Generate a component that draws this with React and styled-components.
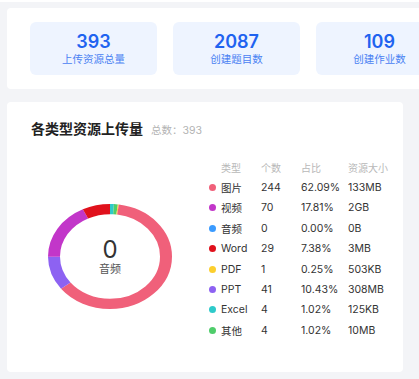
import React from "react";
import styled, { createGlobalStyle } from "styled-components";

const GlobalStyle = createGlobalStyle`
  html, body {
    margin: 0;
    padding: 0;
    background: #f3f4f7;
    overflow: hidden;
    font-family: "Inter", "Noto Sans CJK SC", sans-serif;
  }
`;

const Page = styled.div`
  width: 419px;
  height: 379px;
  overflow: hidden;
  border-top: 2px solid #ffffff;
  box-sizing: border-box;
  padding: 6px 0 0 7px;
`;

const Card = styled.div`
  background: #fff;
  border-radius: 4px;
  box-sizing: border-box;
`;

const StatCard = styled(Card)`
  width: 470px;
  height: 81px;
  padding: 14px 23px;
  display: flex;
  gap: 16px;
`;

const StatBox = styled.div`
  flex: 0 0 127px;
  height: 53px;
  border-radius: 6px;
  background: #eef4ff;
  display: flex;
  flex-direction: column;
  align-items: center;
  justify-content: center;
`;

const StatNum = styled.div`
  font-size: 18px;
  font-weight: 600;
  color: #1f63f0;
  line-height: 21px;
`;

const StatLabel = styled.div`
  font-size: 10.5px;
  color: #4a82f3;
  line-height: 15px;
`;

const TypeCard = styled(Card)`
  margin-top: 13px;
  width: 396px;
  height: 270px;
  padding: 17px 24px;
`;

const TitleRow = styled.div`
  display: flex;
  align-items: baseline;
  gap: 8px;
  height: 20px;
  line-height: 20px;
`;

const Title = styled.div`
  font-size: 14px;
  font-weight: 700;
  color: #222;
`;

const Sub = styled.div`
  font-size: 10.5px;
  color: #b3b3b3;
`;

const Body = styled.div`
  display: flex;
  margin-top: 18px;
`;

const ChartWrap = styled.div`
  position: relative;
  width: 124px;
  height: 105px;
  margin: 47px 0 0 17px;
`;

const Center = styled.div`
  position: absolute;
  inset: 0;
  display: flex;
  flex-direction: column;
  align-items: center;
  justify-content: center;
`;

const CenterNum = styled.div`
  font-size: 24px;
  line-height: 26px;
  color: #333;
`;

const CenterLabel = styled.div`
  font-size: 11px;
  line-height: 13px;
  color: #555;
`;

const Table = styled.div`
  margin-left: 37px;
  display: grid;
  grid-template-columns: 52px 40px 47px auto;
  grid-auto-rows: 20.4px;
  align-items: center;
  font-size: 10.5px;
  color: #333;
  white-space: nowrap;
`;

const Head = styled.div`
  font-size: 10px;
  color: #b8b8b8;
  padding-left: ${p => (p.first ? "12px" : "0")};
`;

const TypeCell = styled.div`
  display: flex;
  align-items: center;
  gap: 5px;
`;

const Dot = styled.span`
  width: 7px;
  height: 7px;
  border-radius: 50%;
  background: ${p => p.color};
  flex: none;
`;

const Cell = styled.div``;

const rows = [
  { name: "图片", count: 244, pct: "62.09%", size: "133MB", color: "#f0607a" },
  { name: "视频", count: 70, pct: "17.81%", size: "2GB", color: "#c236c9" },
  { name: "音频", count: 0, pct: "0.00%", size: "0B", color: "#3b9bff" },
  { name: "Word", count: 29, pct: "7.38%", size: "3MB", color: "#e0111c" },
  { name: "PDF", count: 1, pct: "0.25%", size: "503KB", color: "#fccf2e" },
  { name: "PPT", count: 41, pct: "10.43%", size: "308MB", color: "#8d62f2" },
  { name: "Excel", count: 4, pct: "1.02%", size: "125KB", color: "#2ecaca" },
  { name: "其他", count: 4, pct: "1.02%", size: "10MB", color: "#4fcd6b" },
];

// clockwise order of slices starting at 12 o'clock
const ringOrder = ["Excel", "其他", "PDF", "图片", "PPT", "视频", "Word"];

function Donut() {
  const total = rows.reduce((s, r) => s + r.count, 0);
  const R = 56;
  const C = 2 * Math.PI * R;
  let acc = 0;
  const segs = ringOrder.map(n => {
    const r = rows.find(x => x.name === n);
    const len = (r.count / total) * C;
    const seg = { color: r.color, len, off: acc };
    acc += len;
    return seg;
  });
  return (
    <svg width="124" height="105" viewBox="0 0 124 124" preserveAspectRatio="none">
      <g transform="rotate(-90 62 62)">
        {segs.map((s, i) => (
          <circle
            key={i}
            cx="62"
            cy="62"
            r={R}
            fill="none"
            stroke={s.color}
            strokeWidth="12"
            strokeDasharray={`${s.len} ${C - s.len}`}
            strokeDashoffset={-s.off}
          />
        ))}
      </g>
    </svg>
  );
}

export default function App() {
  return (
    <Page>
      <GlobalStyle />
      <StatCard>
        <StatBox>
          <StatNum>393</StatNum>
          <StatLabel>上传资源总量</StatLabel>
        </StatBox>
        <StatBox>
          <StatNum>2087</StatNum>
          <StatLabel>创建题目数</StatLabel>
        </StatBox>
        <StatBox>
          <StatNum>109</StatNum>
          <StatLabel>创建作业数</StatLabel>
        </StatBox>
      </StatCard>
      <TypeCard>
        <TitleRow>
          <Title>各类型资源上传量</Title>
          <Sub>总数：393</Sub>
        </TitleRow>
        <Body>
          <ChartWrap>
            <Donut />
            <Center>
              <CenterNum>0</CenterNum>
              <CenterLabel>音频</CenterLabel>
            </Center>
          </ChartWrap>
          <Table>
            <Head first>类型</Head>
            <Head>个数</Head>
            <Head>占比</Head>
            <Head>资源大小</Head>
            {rows.map(r => (
              <React.Fragment key={r.name}>
                <TypeCell>
                  <Dot color={r.color} />
                  {r.name}
                </TypeCell>
                <Cell>{r.count}</Cell>
                <Cell>{r.pct}</Cell>
                <Cell>{r.size}</Cell>
              </React.Fragment>
            ))}
          </Table>
        </Body>
      </TypeCard>
    </Page>
  );
}
